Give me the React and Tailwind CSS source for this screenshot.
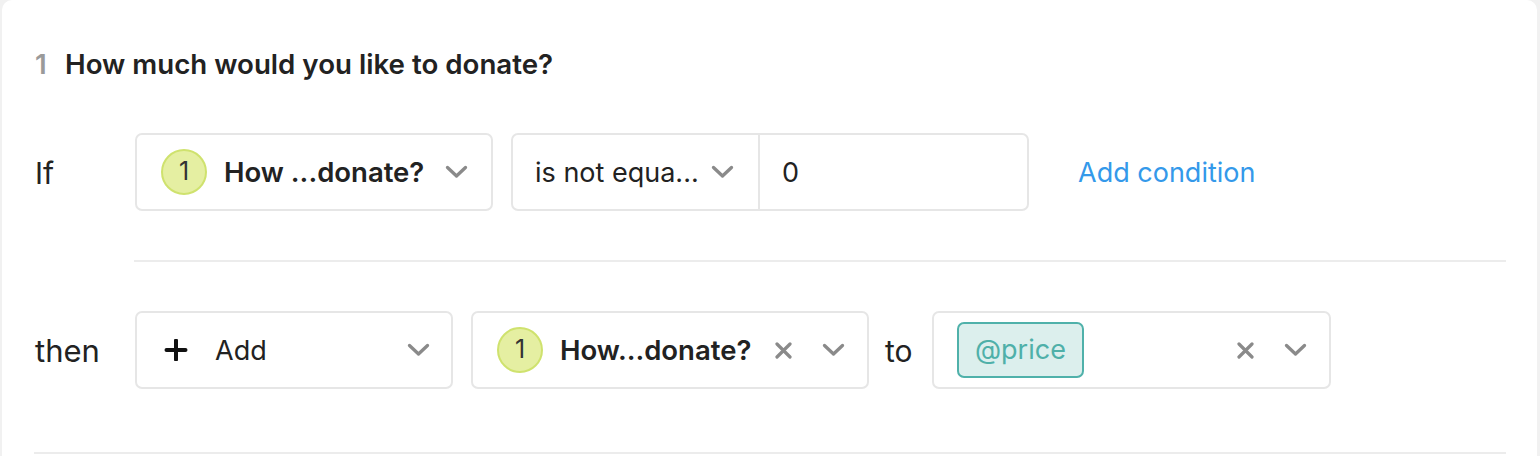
import React from "react";

function Chevron() {
  return (
    <svg width="23" height="14" viewBox="0 0 23 14" className="shrink-0">
      <path d="M2.5 2.5 L11.5 11 L20.5 2.5" fill="none" stroke="#8a8a8a" strokeWidth="3.3" strokeLinecap="round" strokeLinejoin="round" />
    </svg>
  );
}

function XIcon() {
  return (
    <svg width="17" height="17" viewBox="0 0 17 17" className="shrink-0">
      <path d="M2 2 L15 15 M15 2 L2 15" fill="none" stroke="#8a8a8a" strokeWidth="3.2" strokeLinecap="round" />
    </svg>
  );
}

function Badge() {
  return (
    <div className="w-[46px] h-[46px] rounded-full bg-[#e5efa2] border-2 border-[#cfe26e] flex items-center justify-center shrink-0 text-[25px] text-[#333] font-normal">
      1
    </div>
  );
}

export default function App() {
  return (
    <div
      className="w-[1540px] h-[456px] bg-[#f1f1f1] pl-[2px] pr-[3px] overflow-hidden"
      style={{ fontFamily: "Inter, 'Noto Sans', sans-serif" }}
    >
      <div className="bg-white rounded-t-[10px] h-full pl-[33px] pr-[31px] text-[#222]">
        <div className="pt-[47px] h-[81px] flex items-center text-[27.7px] font-semibold leading-[34px]">
          <span className="text-[#9a9a9a] w-[30px]">1</span>
          <span>How much would you like to donate?</span>
        </div>

        <div className="mt-[52px] flex items-center h-[78px]">
          <div className="w-[100px] text-[30px] pt-[2px]">If</div>
          <div className="w-[358px] h-[78px] border-2 border-[#e6e6e6] rounded-[7px] flex items-center pl-[24px] pr-[23px]">
            <Badge />
            <span className="ml-[17px] text-[27.5px] font-semibold flex-1 pt-[2px]">How ...donate?</span>
            <Chevron />
          </div>
          <div className="ml-[18px] w-[518px] h-[78px] border-2 border-[#e6e6e6] rounded-[7px] flex">
            <div className="w-[247px] flex items-center pl-[22px] pr-[24px] border-r-2 border-[#e6e6e6]">
              <span className="text-[27px] flex-1 pt-[2px]">is not equa...</span>
              <Chevron />
            </div>
            <div className="flex items-center pl-[22px] text-[27px] pt-[2px]">0</div>
          </div>
          <div className="ml-[49px] text-[27px] text-[#3499ea] pt-[2px]">Add condition</div>
        </div>

        <div className="mt-[49px] ml-[99px] h-[2px] bg-[#ececec]" />

        <div className="mt-[49px] flex items-center h-[78px]">
          <div className="w-[100px] text-[31px] pt-[2px]">then</div>
          <div className="w-[318px] h-[78px] border-2 border-[#e6e6e6] rounded-[7px] flex items-center pl-[27px] pr-[21px]">
            <svg width="24" height="22" viewBox="0 0 24 22" className="shrink-0">
              <path d="M12 1.5 L12 20.5 M2.5 11 L21.5 11" fill="none" stroke="#111" strokeWidth="4" strokeLinecap="round" />
            </svg>
            <span className="ml-[27px] text-[27px] flex-1 pt-[2px]">Add</span>
            <Chevron />
          </div>
          <div className="ml-[18px] w-[398px] h-[78px] border-2 border-[#e6e6e6] rounded-[7px] flex items-center pl-[24px] pr-[22px]">
            <Badge />
            <span className="ml-[17px] text-[27.5px] font-semibold flex-1 pt-[2px]">How...donate?</span>
            <XIcon />
            <span className="w-[30px]" />
            <Chevron />
          </div>
          <div className="ml-[16px] text-[30px] w-[47px] pt-[2px]">to</div>
          <div className="w-[399px] h-[78px] border-2 border-[#e6e6e6] rounded-[7px] flex items-center pl-[23px] pr-[22px]">
            <div className="h-[56px] px-[16px] flex items-center rounded-[7px] border-2 border-[#4fb1aa] bg-[#dcefed] text-[27px] text-[#4fb0a9]">
              @price
            </div>
            <span className="flex-1" />
            <XIcon />
            <span className="w-[30px]" />
            <Chevron />
          </div>
        </div>

        <div className="mt-[63px] -ml-[1px] h-[2px] bg-[#ececec]" />
      </div>
    </div>
  );
}
